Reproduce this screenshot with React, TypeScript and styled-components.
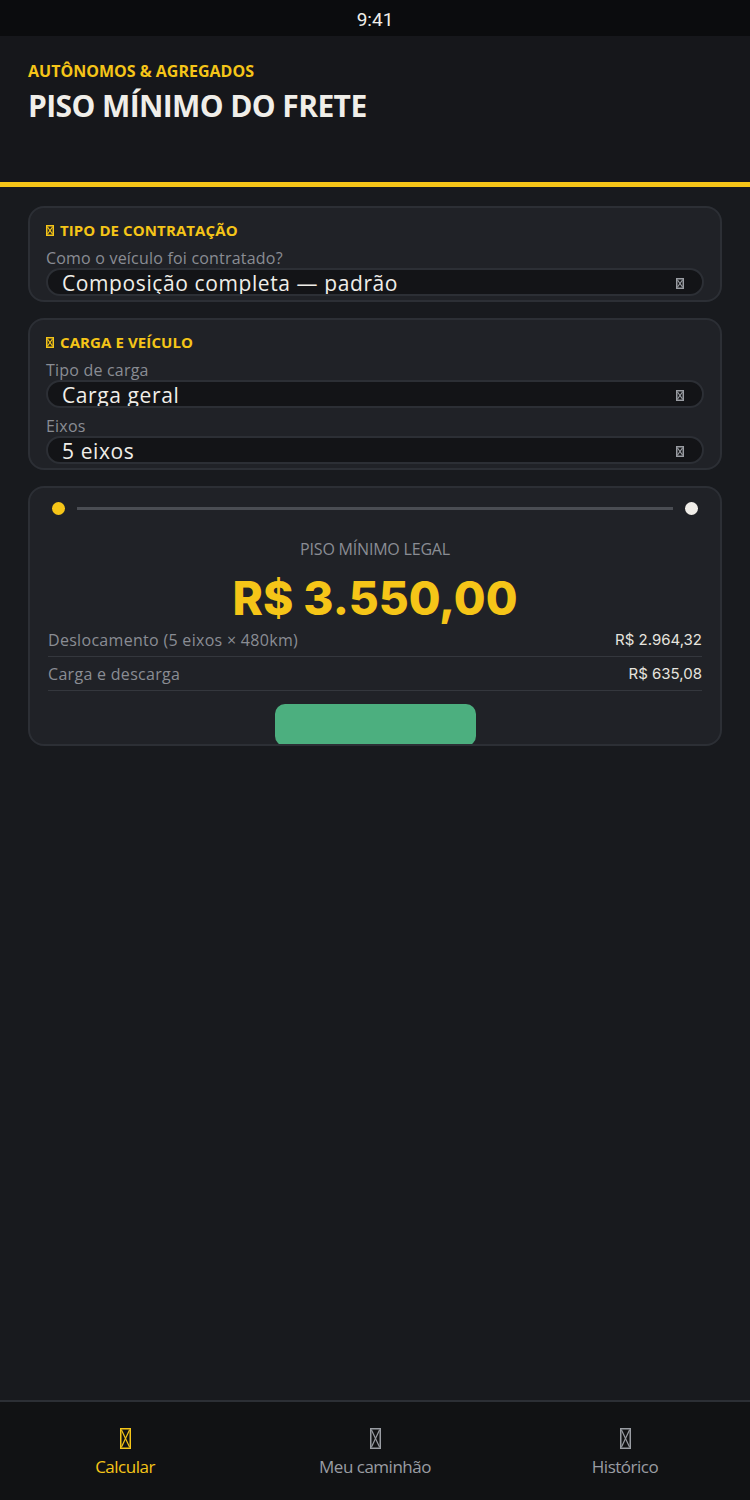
import styled, { createGlobalStyle } from 'styled-components';

const GlobalStyle = createGlobalStyle`
  * { box-sizing: border-box; }
  html, body { margin: 0; padding: 0; background: #181a1e; }
  body { font-family: 'Open Sans', 'Noto Sans', sans-serif; }
`;

const YELLOW = '#f5c518';

interface ISelectField {
  label: string;
  value: string;
}

interface IBreakdownRow {
  label: string;
  value: string;
}

const breakdown: IBreakdownRow[] = [
  { label: 'Deslocamento (5 eixos × 480km)', value: 'R$ 2.964,32' },
  { label: 'Carga e descarga', value: 'R$ 635,08' },
];

const navItems = [
  { label: 'Calcular', active: true },
  { label: 'Meu caminhão', active: false },
  { label: 'Histórico', active: false },
];

/**
 * @description glyph box used where the icon font failed to load
 */
function Tofu({ w, h, color }: { w: number; h: number; color: string }) {
  return (
    <svg width={w} height={h} viewBox={`0 0 ${w} ${h}`} style={{ display: 'block' }}>
      <rect x={0.75} y={0.75} width={w - 1.5} height={h - 1.5} fill="none" stroke={color} strokeWidth={1.5} />
      <line x1={1.5} y1={2} x2={w - 1.5} y2={h - 2} stroke={color} strokeWidth={1.2} />
      <line x1={w - 1.5} y1={2} x2={1.5} y2={h - 2} stroke={color} strokeWidth={1.2} />
    </svg>
  );
}

function Select({ label, value }: ISelectField) {
  return (
    <Field>
      <FieldLabel>{label}</FieldLabel>
      <SelectBox>
        <span>{value}</span>
        <Tofu w={8} h={11} color="#9a9da3" />
      </SelectBox>
    </Field>
  );
}

function App() {
  return (
    <>
      <GlobalStyle />
      <Screen>
        <StatusBar>9:41</StatusBar>
        <Header>
          <Eyebrow>AUTÔNOMOS &amp; AGREGADOS</Eyebrow>
          <Title>PISO MÍNIMO DO FRETE</Title>
        </Header>
        <Content>
          <Card>
            <SectionTitle>
              <Tofu w={8} h={11} color={YELLOW} />
              TIPO DE CONTRATAÇÃO
            </SectionTitle>
            <Select label="Como o veículo foi contratado?" value="Composição completa — padrão" />
          </Card>
          <Card>
            <SectionTitle>
              <Tofu w={8} h={11} color={YELLOW} />
              CARGA E VEÍCULO
            </SectionTitle>
            <Select label="Tipo de carga" value="Carga geral" />
            <Select label="Eixos" value="5 eixos" />
          </Card>
          <ResultCard>
            <Slider>
              <Dot color={YELLOW} />
              <Track />
              <Dot color="#f0eee9" />
            </Slider>
            <ResultLabel>PISO MÍNIMO LEGAL</ResultLabel>
            <BigValue>R$ 3.550,00</BigValue>
            <Rows>
              {breakdown.map(({ label, value }) => (
                <Row key={label}>
                  <span>{label}</span>
                  <RowValue>{value}</RowValue>
                </Row>
              ))}
            </Rows>
            <ButtonWrap>
              <SaveButton />
            </ButtonWrap>
          </ResultCard>
        </Content>
        <BottomNav>
          {navItems.map(({ label, active }) => (
            <NavItem key={label} $active={active}>
              <Tofu w={11} h={21} color={active ? YELLOW : '#9a9da3'} />
              <span>{label}</span>
            </NavItem>
          ))}
        </BottomNav>
      </Screen>
    </>
  );
}

const Screen = styled.div`
  width: 750px;
  height: 1500px;
  display: flex;
  flex-direction: column;
  background: #181a1e;
`;

const StatusBar = styled.div`
  height: 36px;
  background: #0b0c0e;
  color: #f0eee9;
  font-family: Roboto, sans-serif;
  font-size: 19px;
  display: flex;
  align-items: center;
  justify-content: center;
  padding-top: 2px;
`;

const Header = styled.div`
  height: 151px;
  background: #16171b;
  border-bottom: 5px solid ${YELLOW};
  padding: 22px 28px 0;
`;

const Eyebrow = styled.div`
  color: ${YELLOW};
  font-size: 16px;
  font-weight: 700;
  line-height: 26px;
  letter-spacing: 0;
`;

const Title = styled.h1`
  margin: 2px 0 0;
  color: #f0eee9;
  font-size: 30px;
  font-weight: 700;
  line-height: 40px;
  letter-spacing: -0.6px;
`;

const Content = styled.div`
  flex: 1;
  display: flex;
  flex-direction: column;
  gap: 16px;
  padding: 19px 28px 0;
`;

const Card = styled.div`
  background: #202227;
  border: 2px solid #2c2f35;
  border-radius: 16px;
  padding: 11px 16px 4px;
  display: flex;
  flex-direction: column;
  gap: 8px;
`;

const SectionTitle = styled.div`
  display: flex;
  align-items: center;
  gap: 6px;
  color: ${YELLOW};
  font-size: 15px;
  font-weight: 700;
  line-height: 22px;
  letter-spacing: 0.1px;
  margin-bottom: -1px;
`;

const Field = styled.div`
  display: flex;
  flex-direction: column;
`;

const FieldLabel = styled.div`
  color: #8a8d94;
  font-size: 16px;
  line-height: 20px;
  letter-spacing: 0.2px;
`;

const SelectBox = styled.div`
  height: 28px;
  background: #131417;
  border: 2px solid #2c2f35;
  border-radius: 14px;
  padding: 2px 18px 0 14px;
  display: flex;
  align-items: center;
  justify-content: space-between;
  overflow: hidden;
  color: #f0eee9;
  font-size: 21px;
  letter-spacing: 0.6px;
  span {
    line-height: 26px;
  }
`;

const ResultCard = styled.div`
  height: 260px;
  background: #202227;
  border: 2px solid #2c2f35;
  border-radius: 16px;
  padding: 14px 18px 0;
  overflow: hidden;
  display: flex;
  flex-direction: column;
`;

const Slider = styled.div`
  display: flex;
  align-items: center;
  gap: 8px;
  padding: 0 4px;
  height: 16px;
`;

const Dot = styled.div<{ color: string }>`
  width: 13px;
  height: 13px;
  border-radius: 50%;
  background: ${(p) => p.color};
  flex-shrink: 0;
`;

const Track = styled.div`
  flex: 1;
  height: 3px;
  margin: 0 4px;
  background: #4a4d53;
`;

const ResultLabel = styled.div`
  margin-top: 23px;
  text-align: center;
  color: #8a8d94;
  font-size: 16px;
  line-height: 22px;
  letter-spacing: -0.2px;
`;

const BigValue = styled.div`
  margin-top: 13px;
  text-align: center;
  color: ${YELLOW};
  font-family: Inter, sans-serif;
  font-size: 46px;
  font-weight: 800;
  line-height: 50px;
`;

const Rows = styled.div`
  display: flex;
  flex-direction: column;
`;

const Row = styled.div`
  height: 34px;
  display: flex;
  align-items: center;
  justify-content: space-between;
  border-bottom: 1px solid #34373d;
  color: #8a8d94;
  font-size: 16px;
  letter-spacing: 0.3px;
`;

const RowValue = styled.span`
  color: #e6e4df;
  font-family: Inter, sans-serif;
  font-size: 15px;
  letter-spacing: 0;
`;

const ButtonWrap = styled.div`
  display: flex;
  justify-content: center;
  padding-top: 13px;
`;

const SaveButton = styled.button`
  width: 201px;
  height: 42px;
  border: none;
  border-radius: 10px;
  background: #4caf7f;
`;

const BottomNav = styled.nav`
  height: 100px;
  background: #111214;
  border-top: 2px solid #2c2f35;
  display: grid;
  grid-template-columns: repeat(3, 1fr);
  padding-top: 26px;
`;

const NavItem = styled.div<{ $active: boolean }>`
  display: flex;
  flex-direction: column;
  align-items: center;
  gap: 6px;
  color: ${(p) => (p.$active ? YELLOW : '#9a9da3')};
  font-size: 17px;
  letter-spacing: -0.5px;
`;

export default App;
